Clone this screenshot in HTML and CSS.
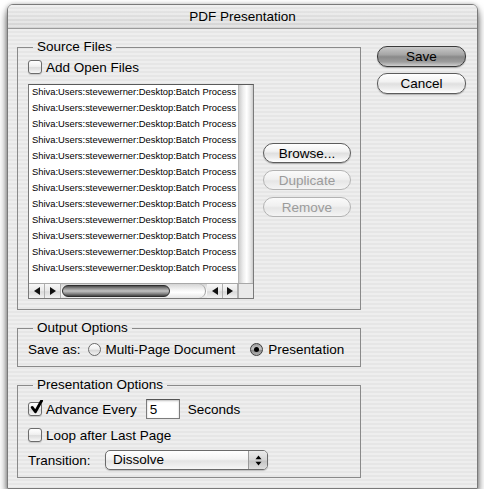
FILE: index.html
```html
<!DOCTYPE html>
<html>
<head>
<meta charset="utf-8">
<title>PDF Presentation</title>
<link rel="stylesheet" href="styles.css">
</head>
<body>
<div class="window">
  <div class="titlebar">PDF Presentation</div>
  <div class="content">
    <div class="left">
      <fieldset class="group source">
        <legend>Source Files</legend>
        <div class="row check-row">
          <span class="checkbox"></span><span>Add Open Files</span>
        </div>
        <div class="source-body">
          <div class="listbox">
            <div class="list-main">
              <div class="list-items">
                <div class="item">Shiva:Users:stevewerner:Desktop:Batch Process</div>
                <div class="item">Shiva:Users:stevewerner:Desktop:Batch Process</div>
                <div class="item">Shiva:Users:stevewerner:Desktop:Batch Process</div>
                <div class="item">Shiva:Users:stevewerner:Desktop:Batch Process</div>
                <div class="item">Shiva:Users:stevewerner:Desktop:Batch Process</div>
                <div class="item">Shiva:Users:stevewerner:Desktop:Batch Process</div>
                <div class="item">Shiva:Users:stevewerner:Desktop:Batch Process</div>
                <div class="item">Shiva:Users:stevewerner:Desktop:Batch Process</div>
                <div class="item">Shiva:Users:stevewerner:Desktop:Batch Process</div>
                <div class="item">Shiva:Users:stevewerner:Desktop:Batch Process</div>
                <div class="item">Shiva:Users:stevewerner:Desktop:Batch Process</div>
                <div class="item">Shiva:Users:stevewerner:Desktop:Batch Process</div>
              </div>
              <div class="vscroll"></div>
            </div>
            <div class="hscroll">
              <span class="sbtn"><span class="tri-left"></span></span>
              <span class="sbtn"><span class="tri-right"></span></span>
              <div class="htrack"><div class="thumb"></div></div>
              <span class="sbtn"><span class="tri-left"></span></span>
              <span class="sbtn last"><span class="tri-right"></span></span>
              <div class="corner"></div>
            </div>
          </div>
          <div class="side-buttons">
            <button class="btn">Browse...</button>
            <button class="btn disabled">Duplicate</button>
            <button class="btn disabled">Remove</button>
          </div>
        </div>
      </fieldset>

      <fieldset class="group output">
        <legend>Output Options</legend>
        <div class="row">
          <span>Save as:</span>
          <span class="radio first"></span><span class="radio-label">Multi-Page Document</span>
          <span class="radio on second"></span><span class="radio-label">Presentation</span>
        </div>
      </fieldset>

      <fieldset class="group pres">
        <legend>Presentation Options</legend>
        <div class="row row-advance">
          <span class="checkbox checked"><svg width="16" height="16" viewBox="0 0 16 16"><path d="M3.2 7.4 L6.4 11.8 L12.6 0.8" fill="none" stroke="#000" stroke-width="2.8" stroke-linecap="round" stroke-linejoin="round"/></svg></span><span>Advance Every</span>
          <span class="field">5</span>
          <span class="seconds">Seconds</span>
        </div>
        <div class="row check-row loop">
          <span class="checkbox"></span><span>Loop after Last Page</span>
        </div>
        <div class="row row-transition">
          <span class="trans-label">Transition:</span>
          <div class="popup">
            <span class="popup-text">Dissolve</span>
            <span class="popup-arrows">
              <svg width="7" height="11" viewBox="0 0 7 11"><path d="M3.5 0.5 L6.5 4.2 L0.5 4.2 Z" fill="#000"/><path d="M0.5 6.8 L6.5 6.8 L3.5 10.5 Z" fill="#000"/></svg>
            </span>
          </div>
        </div>
      </fieldset>
    </div>

    <div class="right">
      <button class="btn big default">Save</button>
      <button class="btn big">Cancel</button>
    </div>
  </div>
</div>
</body>
</html>
```

FILE: styles.css
```css
* { box-sizing: border-box; }

html, body {
  margin: 0;
  padding: 0;
  background: #ffffff;
}

body {
  font-family: "Liberation Sans", Arial, sans-serif;
  font-size: 13.5px;
  color: #000;
}

.window {
  margin: 4px 0 0 7px;
  width: 471px;
  height: 485px;
  border: 1px solid #7a7a7a;
  border-radius: 6px 6px 0 0;
  background: repeating-linear-gradient(to bottom, #eeeeee 0, #eeeeee 2px, #e6e6e6 2px, #e6e6e6 4px);
  box-shadow: 0 6px 8px rgba(0, 0, 0, 0.6), 0 0 4px rgba(0, 0, 0, 0.25);
  display: flex;
  flex-direction: column;
}

.titlebar {
  height: 24px;
  flex: none;
  border-bottom: 1px solid #9a9a9a;
  border-radius: 5px 5px 0 0;
  text-align: center;
  line-height: 23px;
  font-size: 13.5px;
  background:
    repeating-linear-gradient(to bottom, rgba(255,255,255,0.35) 0, rgba(255,255,255,0.35) 2px, rgba(255,255,255,0) 2px, rgba(255,255,255,0) 4px),
    linear-gradient(#e9e9e9, #d3d3d3);
}

.content {
  flex: 1;
  display: flex;
  gap: 16px;
  padding: 10px 11px 10px 9px;
}

.left {
  width: 344px;
  display: flex;
  flex-direction: column;
  gap: 10px;
}

.right {
  width: 89px;
  padding-top: 7px;
  display: flex;
  flex-direction: column;
  gap: 6px;
}

/* group boxes */
.group {
  margin: 0;
  min-width: 0;
  border: 1px solid #8a8a8a;
  padding: 0 9px 10px 10px;
}

.group legend {
  padding: 0 4px;
  margin-left: 5px;
  line-height: 16px;
  font-size: 13.5px;
}

.source { padding-top: 3px; }
.output { padding-top: 4px; padding-bottom: 8px; }
.pres { padding-top: 5px; padding-bottom: 7px; }

.row {
  display: flex;
  align-items: center;
  height: 18px;
  white-space: nowrap;
}

/* checkbox */
.checkbox {
  position: relative;
  width: 14px;
  height: 14px;
  flex: none;
  margin-right: 4px;
  border: 1px solid #6c6c6c;
  border-radius: 3px;
  background: linear-gradient(#ffffff, #f0f0f0 45%, #dcdcdc 55%, #f6f6f6);
  box-shadow: 0 1px 1px rgba(0,0,0,0.15);
}

.checkbox svg {
  position: absolute;
  left: 0;
  top: -3px;
}

/* source list */
.source-body {
  display: flex;
  margin-top: 8px;
  gap: 9px;
}

.listbox {
  width: 226px;
  height: 215px;
  border: 1px solid #7a7a7a;
  border-top-color: #5a5a5a;
  background: #fff;
  display: flex;
  flex-direction: column;
}

.list-main {
  flex: 1;
  display: flex;
  min-height: 0;
}

.list-items {
  flex: 1;
  min-width: 0;
  padding-left: 3px;
}

.item {
  height: 16px;
  line-height: 14px;
  font-size: 9.4px;
  white-space: nowrap;
}

.vscroll {
  width: 15px;
  flex: none;
  border-left: 1px solid #b8b8b8;
  background: linear-gradient(to right, #cdcdcd, #eeeeee 30%, #ffffff 55%, #e4e4e4 85%, #cacaca);
}

.hscroll {
  height: 15px;
  flex: none;
  display: flex;
  border-top: 1px solid #a8a8a8;
  background: linear-gradient(#d4d4d4, #f4f4f4 40%, #ffffff 60%, #e6e6e6);
}

.sbtn {
  width: 16px;
  flex: none;
  display: flex;
  align-items: center;
  justify-content: center;
  border-right: 1px solid #b0b0b0;
  background: linear-gradient(#f8f8f8, #e8e8e8 50%, #dadada 55%, #f2f2f2);
}

.sbtn.last { width: 15px; }

.tri-left {
  width: 0; height: 0;
  border-top: 4px solid transparent;
  border-bottom: 4px solid transparent;
  border-right: 6px solid #111;
}

.tri-right {
  width: 0; height: 0;
  border-top: 4px solid transparent;
  border-bottom: 4px solid transparent;
  border-left: 6px solid #111;
}

.htrack {
  flex: 1;
  padding: 1px 2px 1px 0;
  border-radius: 0 7px 7px 0;
  border-right: 1px solid #9c9c9c;
  margin-right: 1px;
}

.thumb {
  width: 108px;
  height: 12px;
  margin-left: 1px;
  border: 1px solid #2e2e2e;
  border-radius: 6px;
  background: linear-gradient(#4f4f4f, #8e8e8e 25%, #c2c2c2 50%, #8a8a8a 75%, #444444);
}

.corner {
  width: 15px;
  flex: none;
  border-left: 1px solid #b0b0b0;
  background: #e9e9e9;
}

/* buttons */
.side-buttons {
  width: 88px;
  padding-top: 59px;
  display: flex;
  flex-direction: column;
  gap: 7px;
}

.btn {
  display: block;
  width: 100%;
  height: 20px;
  padding: 0;
  font-family: "Liberation Sans", Arial, sans-serif;
  font-size: 13.5px;
  color: #000;
  border: 1px solid #5c5c5c;
  border-radius: 10px;
  background: linear-gradient(#ffffff, #f2f2f2 40%, #e0e0e0 52%, #ececec 75%, #ffffff);
  box-shadow: 0 1px 1px rgba(0,0,0,0.25);
}

.btn.big { height: 21px; }

.btn.default {
  border-color: #3a3a3a;
  background: linear-gradient(#c8c8c8, #a6a6a6 40%, #8a8a8a 52%, #9c9c9c 78%, #cfcfcf);
}

.btn.disabled {
  color: #9b9b9b;
  border-color: #b3b3b3;
  box-shadow: none;
  background: linear-gradient(#fafafa, #f0f0f0 45%, #e6e6e6 55%, #f4f4f4);
}

/* radios */
.radio {
  width: 13px;
  height: 13px;
  flex: none;
  border: 1px solid #6a6a6a;
  border-radius: 50%;
  background: linear-gradient(#ffffff, #efefef 45%, #d8d8d8 60%, #f4f4f4);
  display: flex;
  align-items: center;
  justify-content: center;
}

.radio.first { margin-left: 7px; }
.radio.second { margin-left: 15px; }

.radio.on {
  border-color: #3e3e3e;
  background: linear-gradient(#9c9c9c, #c6c6c6 45%, #8e8e8e 60%, #b2b2b2);
}

.radio.on::after {
  content: "";
  width: 5px;
  height: 5px;
  border-radius: 50%;
  background: #000;
}

.radio-label { margin-left: 5px; }

/* presentation options */
.row-advance { height: 22px; }
.loop { margin-top: 6px; }
.row-transition { height: 20px; margin-top: 6px; }

.field {
  width: 34px;
  height: 20px;
  margin-left: 9px;
  padding: 0 3px;
  line-height: 19px;
  background: #fff;
  border: 1px solid #7c7c7c;
  border-top-color: #555;
  box-shadow: inset 0 1px 2px rgba(0,0,0,0.25);
}

.seconds { margin-left: 8px; }

.trans-label { width: 77px; flex: none; }

.popup {
  width: 163px;
  height: 20px;
  display: flex;
  border: 1px solid #6a6a6a;
  border-radius: 5px;
  background: linear-gradient(#ffffff, #f3f3f3 45%, #e4e4e4 55%, #f6f6f6);
  box-shadow: 0 1px 1px rgba(0,0,0,0.2);
  overflow: hidden;
}

.popup-text {
  flex: 1;
  padding-left: 7px;
  line-height: 18px;
}

.popup-arrows {
  width: 19px;
  display: flex;
  align-items: center;
  justify-content: center;
  border-left: 1px solid #9a9a9a;
  background: linear-gradient(#eaeaea, #d6d6d6 50%, #c4c4c4 55%, #dedede);
}
```
